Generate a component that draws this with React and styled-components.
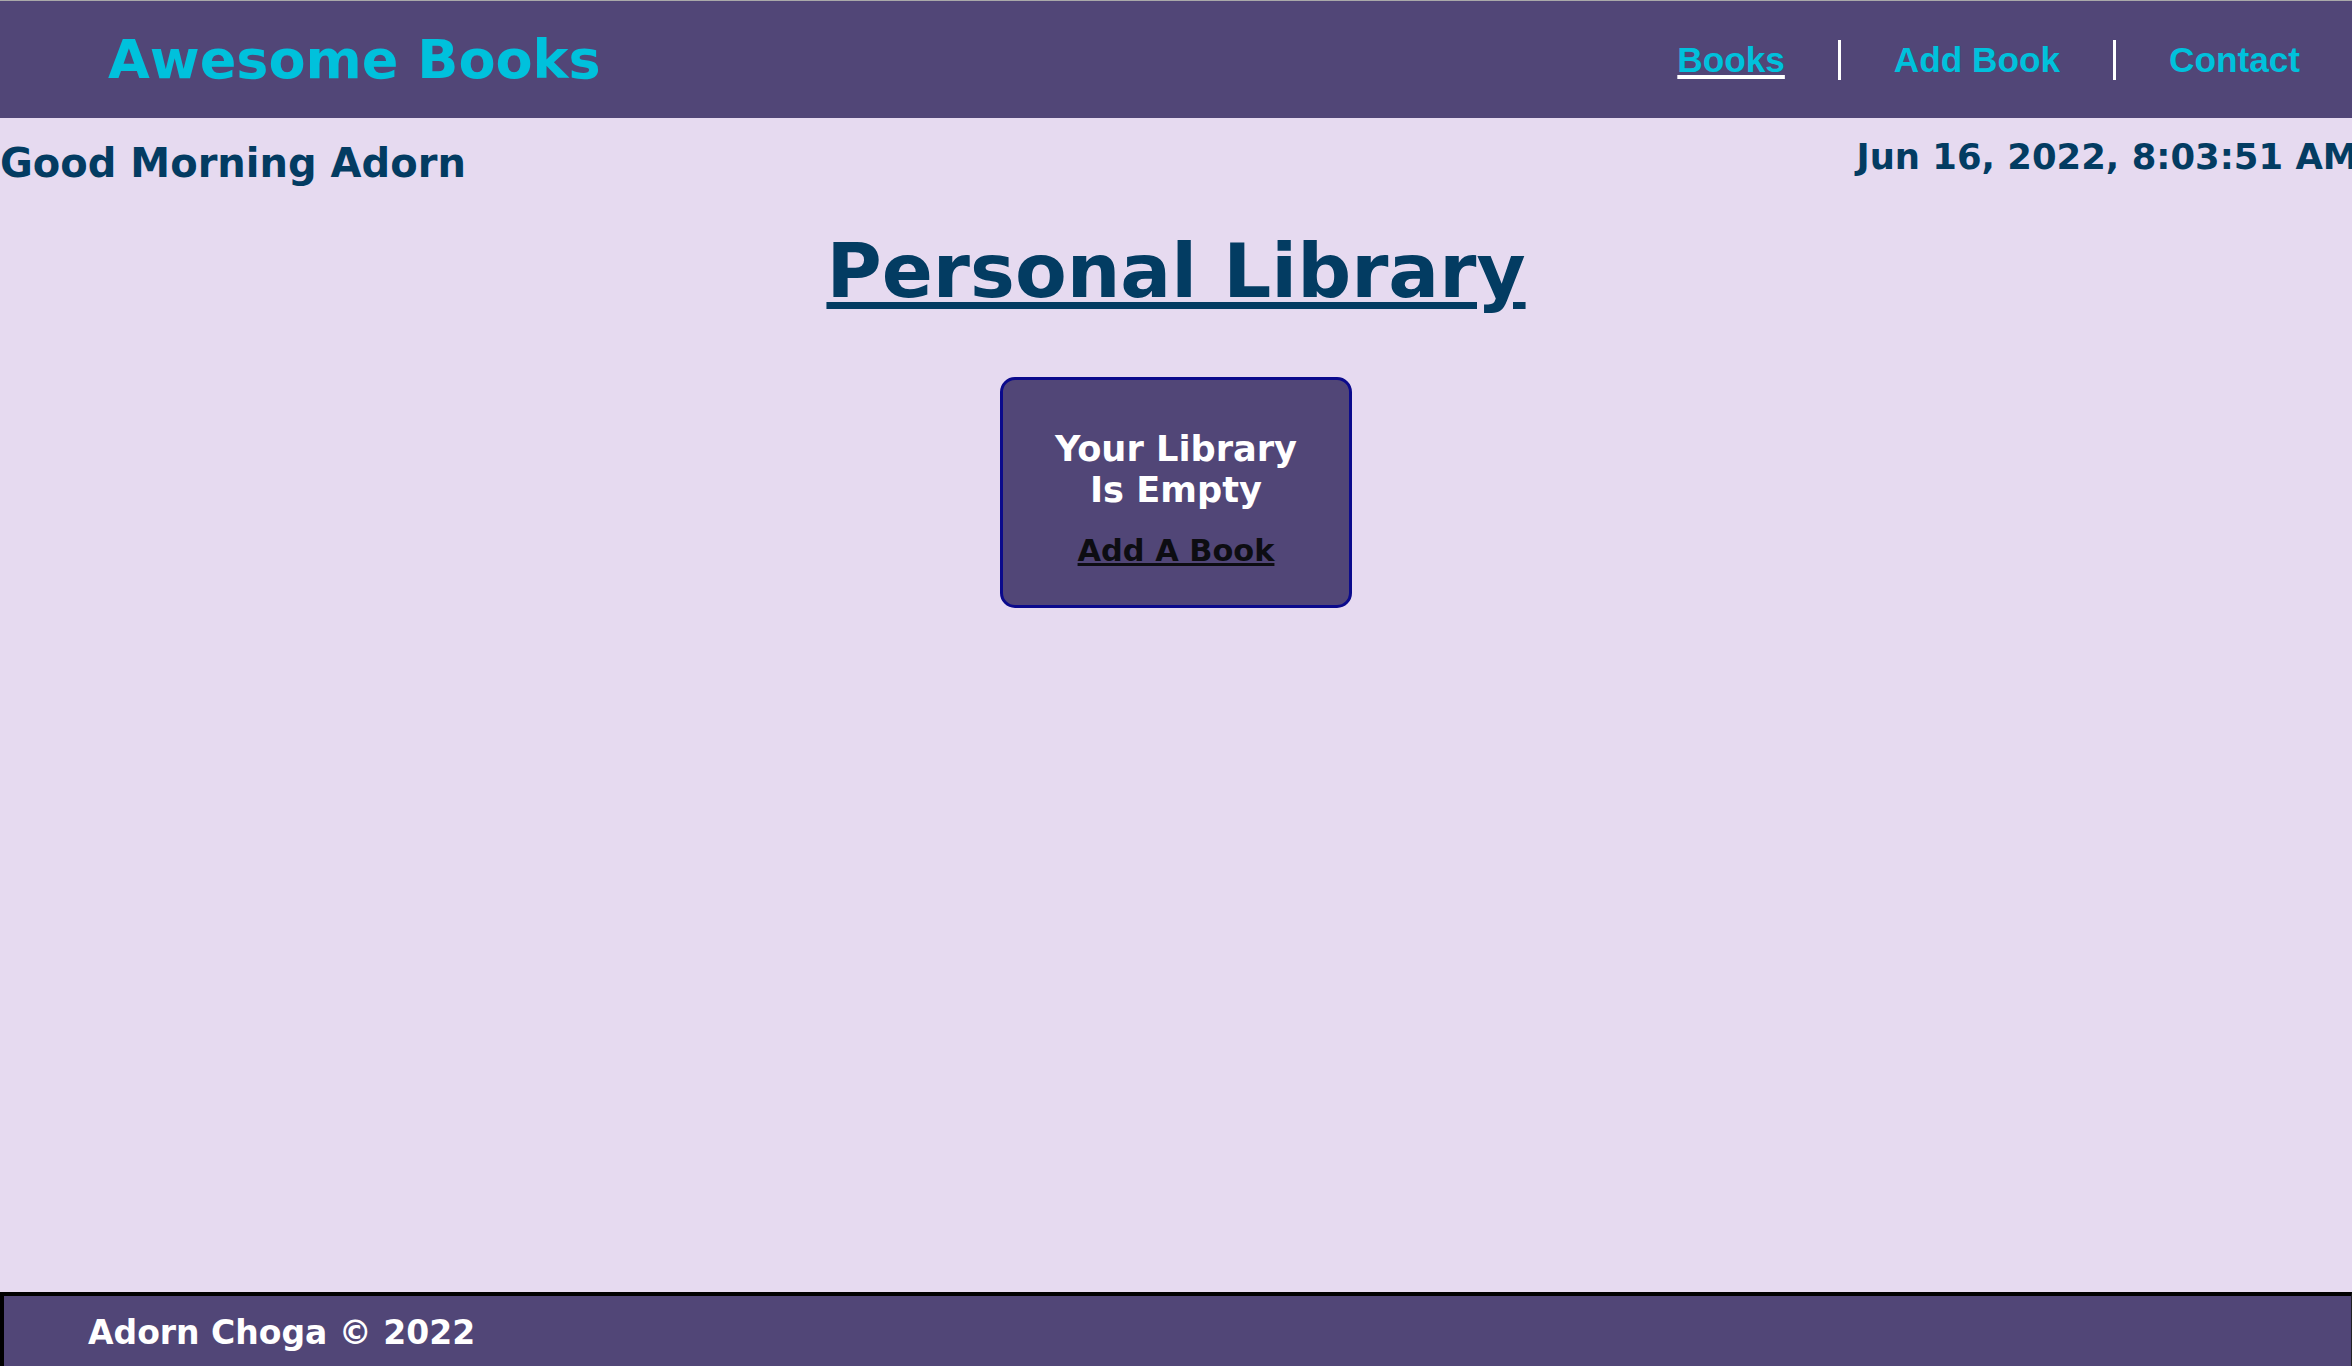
import React from 'react'
import styled, { createGlobalStyle } from 'styled-components'

const GlobalStyle = createGlobalStyle`
  * {
    box-sizing: border-box;
  }
  body {
    margin: 0;
    background: #e6daf0;
    font-family: "DejaVu Sans", sans-serif;
    overflow-x: hidden;
  }
`

const links = [
  { label: 'Books', active: true },
  { label: 'Add Book' },
  { label: 'Contact' },
]

export default function App() {
  return (
    <Page>
      <GlobalStyle />
      <Header>
        <Logo>Awesome Books</Logo>
        <Nav>
          {links.map((link, index) => (
            <NavItem key={link.label} $first={index === 0} $last={index === links.length - 1}>
              <NavLink href="#" $active={link.active}>{link.label}</NavLink>
            </NavItem>
          ))}
        </Nav>
      </Header>
      <Main>
        <InfoBar>
          <Greeting>Good Morning Adorn</Greeting>
          <DateText>Jun 16, 2022, 8:03:51 AM</DateText>
        </InfoBar>
        <Title>Personal Library</Title>
        <EmptyCard>
          <EmptyText>Your Library<br />Is Empty</EmptyText>
          <AddLink href="#">Add A Book</AddLink>
        </EmptyCard>
      </Main>
      <Footer>
        <FooterText>Adorn Choga © 2022</FooterText>
      </Footer>
    </Page>
  )
}

const Page = styled.div`
  display: flex;
  flex-direction: column;
  min-height: 100vh;
`

const Header = styled.header`
  display: flex;
  align-items: center;
  justify-content: space-between;
  height: 118px;
  padding: 0 52px 0 108px;
  background: #514677;
  border-top: 1px solid #a9a9a9;
`

const Logo = styled.h1`
  margin: 0;
  color: #00c1dc;
  font-size: 54px;
  font-weight: bold;
  font-family: "DejaVu Sans", sans-serif;
`

const Nav = styled.ul`
  display: flex;
  align-items: center;
  margin: 0;
  padding: 0;
  list-style: none;
`

const NavItem = styled.li`
  padding: 0 ${p => (p.$last ? '0' : '53px')} 0 ${p => (p.$first ? '0' : '53px')};
  border-left: ${p => (p.$first ? 'none' : '3px solid #fff')};
`

const NavLink = styled.a`
  display: block;
  color: #00c1dc;
  font-family: "Liberation Sans", Arial, sans-serif;
  font-size: 35.2px;
  font-weight: bold;
  text-decoration: ${p => (p.$active ? 'underline' : 'none')};
  text-decoration-color: #fff;
  text-decoration-thickness: 4px;
  text-underline-offset: 3px;
`

const Main = styled.main`
  flex: 1;
  display: flex;
  flex-direction: column;
  align-items: center;
  padding-bottom: 60px;
`

const InfoBar = styled.div`
  display: flex;
  justify-content: space-between;
  align-items: flex-start;
  width: 100%;
  color: #033c62;
  font-weight: bold;
`

const Greeting = styled.h2`
  margin: 22px 0 0;
  font-size: 40px;
  font-weight: bold;
`

const DateText = styled.p`
  margin: 18px -6px 0 0;
  font-size: 35.4px;
  white-space: nowrap;
`

const Title = styled.h1`
  margin: 41px 0 0;
  color: #033c62;
  font-size: 75.4px;
  font-weight: bold;
  text-decoration: underline;
  text-decoration-thickness: 7px;
  text-underline-offset: 5px;
`

const EmptyCard = styled.div`
  display: flex;
  flex-direction: column;
  align-items: center;
  width: 352px;
  margin-top: 62px;
  padding: 48px 20px 37px;
  background: #514677;
  border: 3px solid #0b0a8c;
  border-radius: 15px;
  text-align: center;
`

const EmptyText = styled.h3`
  margin: 0 0 23px;
  color: #fff;
  font-size: 35.2px;
  font-weight: bold;
  line-height: 41px;
`

const AddLink = styled.a`
  color: #0d0d12;
  font-size: 30.4px;
  font-weight: bold;
  text-decoration: underline;
  text-decoration-thickness: 3px;
`

const Footer = styled.footer`
  height: 74px;
  padding: 17px 40px 0 84px;
  background: #514677;
  border-top: 4px solid #000;
  border-left: 4px solid #000;
  border-right: 1px solid #222;
`

const FooterText = styled.p`
  margin: 0;
  color: #fff;
  font-size: 33px;
  font-weight: bold;
`
